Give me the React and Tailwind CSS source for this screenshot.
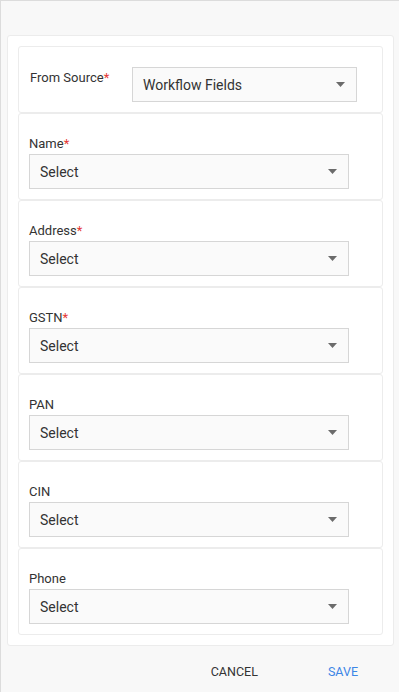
const fields = [
  { label: "Name", required: true },
  { label: "Address", required: true },
  { label: "GSTN", required: true },
  { label: "PAN" },
  { label: "CIN" },
  { label: "Phone" },
];

function Caret() {
  return (
    <svg width="9" height="5" viewBox="0 0 9 5" className="shrink-0">
      <path d="M0 0h9L4.5 5z" fill="#6b6b6b" />
    </svg>
  );
}

function SelectBox({ value, className = "" }) {
  return (
    <div
      className={`flex h-[35px] items-center justify-between border border-[#d6d6d6] bg-[#fafafa] pl-[10px] pr-[11px] text-[14px] text-[#333] ${className}`}
    >
      <span className="pt-[2px]">{value}</span>
      <Caret />
    </div>
  );
}

export default function App() {
  return (
    <div
      className="flex h-[692px] w-[399px] flex-col bg-[#f8f8f8] text-[#333]"
      style={{ fontFamily: "Roboto, 'Liberation Sans', sans-serif" }}
    >
      <div className="flex flex-1 flex-col border-l border-t border-[#dcdcdc] pl-[6px] pr-[5px] pt-[34px]">
        <div className="flex flex-col rounded-[3px] border border-[#ececec] bg-white px-[10px] pb-[10px] pt-[10px]">
          <div className="flex h-[67px] items-start rounded-[3px] border border-[#ececec] pl-[11px] pt-[20px]">
            <div className="w-[102px] pt-[1px] text-[13px]">
              From Source<span className="text-[#e53935]">*</span>
            </div>
            <SelectBox value="Workflow Fields" className="w-[225px]" />
          </div>
          {fields.map((f) => (
            <div
              key={f.label}
              className="flex h-[87px] flex-col rounded-[3px] border border-[#ececec] pl-[10px] pt-[22px]"
            >
              <div className="mb-[2px] text-[13px] leading-[16px]">
                {f.label}
                {f.required && <span className="text-[#e53935]">*</span>}
              </div>
              <SelectBox value="Select" className="w-[320px]" />
            </div>
          ))}
        </div>
        <div className="flex justify-end gap-[70px] pr-[36px] pt-[17px] text-[12.5px]">
          <span className="text-[#333]">CANCEL</span>
          <span className="text-[#3d86e6]">SAVE</span>
        </div>
      </div>
    </div>
  );
}
